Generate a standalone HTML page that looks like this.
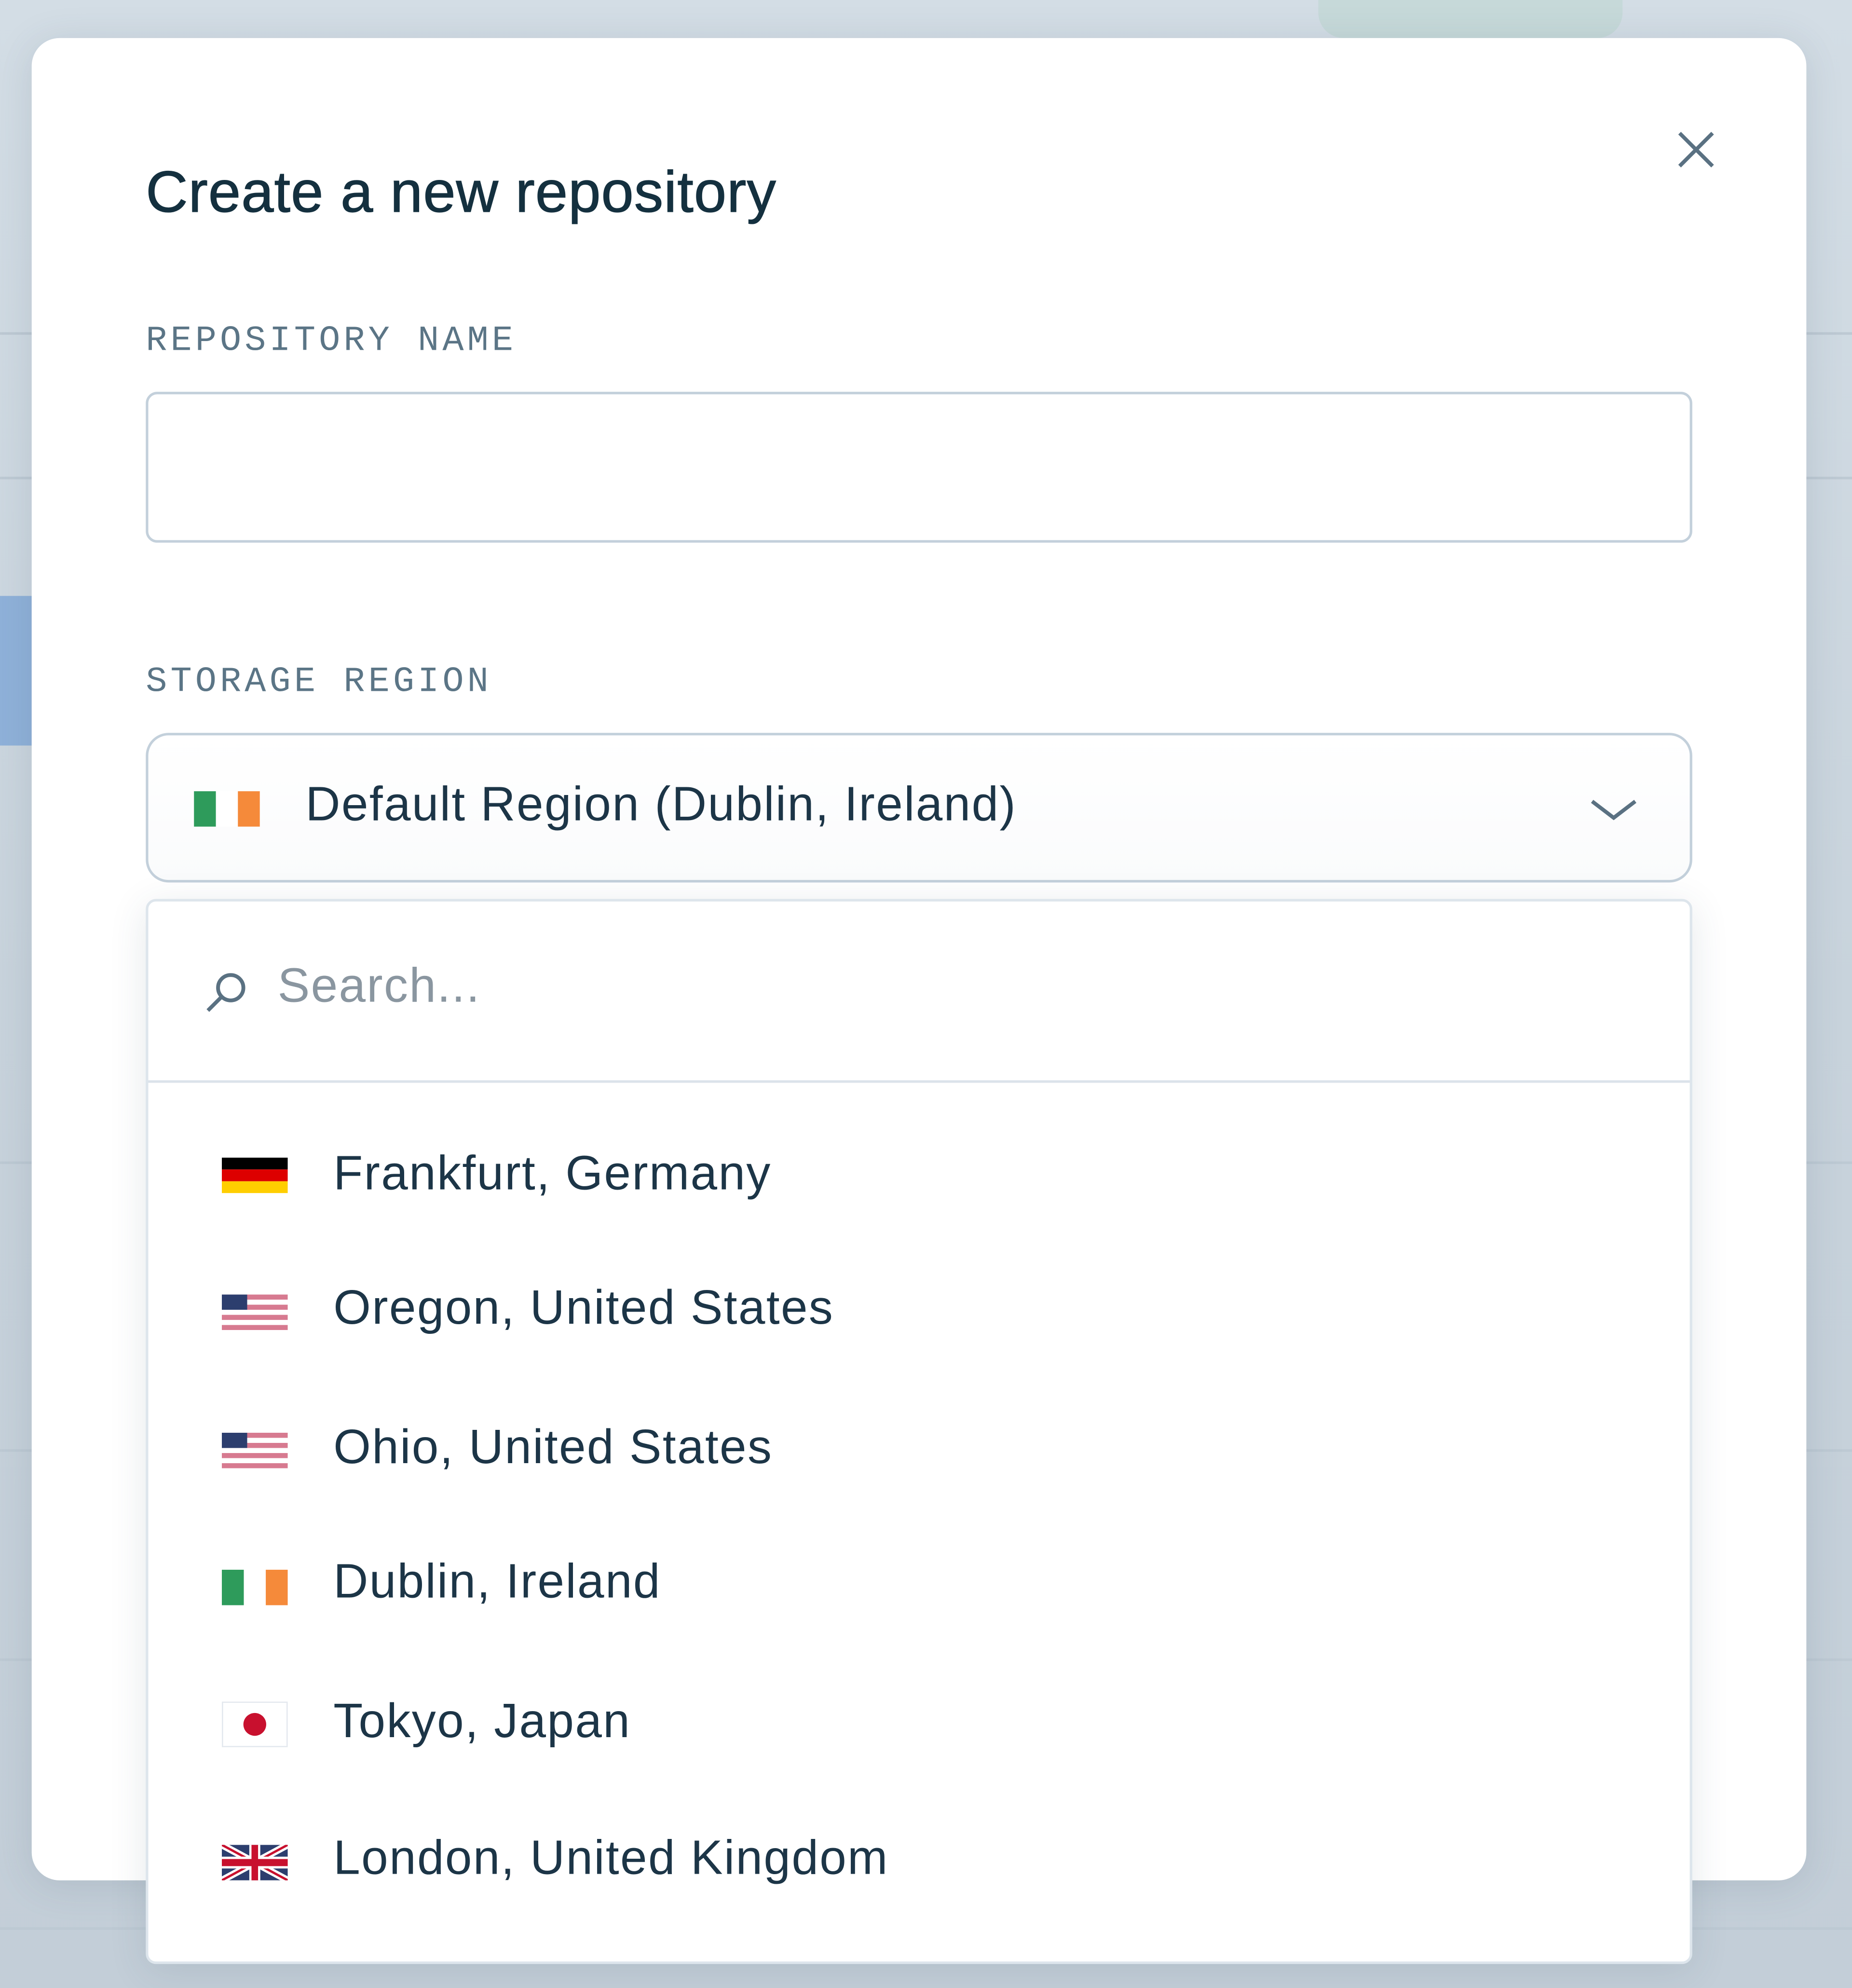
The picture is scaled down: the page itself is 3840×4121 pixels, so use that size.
<!DOCTYPE html>
<html><head><meta charset="utf-8"><style>
html,body{margin:0;padding:0;}
body{width:3840px;height:4120px;overflow:hidden;background:#cbd6df;}
#s{position:absolute;left:0;top:0;width:1461px;height:1568px;transform:scale(2.62834);transform-origin:0 0;background:linear-gradient(180deg,#d3dde5 0%,#c8d3dc 50%,#c3ced8 100%);font-family:"Liberation Sans",sans-serif;}
.bgl{position:absolute;height:2px;background:#bdc9d3;}
.modal{position:absolute;left:25px;top:30px;width:1400px;height:1453px;background:#fff;border-radius:22px;box-shadow:0 4px 30px rgba(60,80,100,.15);}
.a{position:absolute;}
.title{left:115px;top:124px;font-size:46px;color:#14303f;letter-spacing:0.4px;white-space:nowrap;-webkit-text-stroke:0.5px #14303f;}
.lbl{font-family:"Liberation Mono",monospace;font-size:28px;letter-spacing:2.7px;color:#5b7586;white-space:nowrap;}
.box{border:2px solid #c3d0db;box-sizing:border-box;background:#fff;}
.txt{font-size:38px;color:#1c3547;white-space:nowrap;letter-spacing:0.9px;}
.flag{position:absolute;width:52px;height:28px;}
</style></head><body><div id="s">
<div class="bgl" style="left:0;top:262px;width:1461px"></div>
<div class="bgl" style="left:0;top:376px;width:1461px"></div>
<div class="bgl" style="left:0;top:916px;width:1461px"></div>
<div class="bgl" style="left:0;top:1143px;width:1461px"></div>
<div class="bgl" style="left:0;top:1308px;width:1461px"></div>
<div class="bgl" style="left:0;top:1520px;width:1461px"></div>
<div class="a" style="left:0;top:470px;width:25px;height:118px;background:#8fb1d9"></div>
<div class="a" style="left:1040px;top:0;width:240px;height:30px;background:#c6d9d9;border-radius:0 0 20px 20px"></div>
<div class="modal"></div>
<svg class="a" style="left:1322px;top:102px" width="32" height="32" viewBox="0 0 32 32"><path d="M3 3L29 29M29 3L3 29" stroke="#5a7182" stroke-width="3" fill="none"/></svg>
<div class="a title">Create a new repository</div>
<div class="a lbl" style="left:115px;top:254px">REPOSITORY NAME</div>
<div class="a box" style="left:115px;top:309px;width:1220px;height:119px;border-radius:9px"></div>
<div class="a lbl" style="left:115px;top:523px">STORAGE REGION</div>
<div class="a box" style="left:115px;top:578px;width:1220px;height:118px;border-radius:18px;background:linear-gradient(#fff,#fafbfc)"></div>
<svg class="flag" style="left:153px;top:624px" viewBox="0 0 3 2" preserveAspectRatio="none"><rect width="1" height="2" fill="#2e9b5b"/><rect x="1" width="1" height="2" fill="#fff"/><rect x="2" width="1" height="2" fill="#f58a3a"/></svg>
<div class="a txt" style="left:241px;top:614px">Default Region (Dublin, Ireland)</div>
<svg class="a" style="left:1254px;top:628px" width="38" height="22" viewBox="0 0 38 22"><path d="M2 4L19 17L36 4" stroke="#5a7182" stroke-width="3" fill="none"/></svg>
<div class="a box" style="left:115px;top:709px;width:1220px;height:840px;border-radius:8px;border-color:#dde5ec;box-shadow:0 6px 30px rgba(50,70,90,.12)"></div>
<div class="a" style="left:117px;top:852px;width:1216px;height:2px;background:#dbe3ea"></div>
<svg class="a" style="left:160px;top:764px" width="38" height="38" viewBox="0 0 38 38"><circle cx="22" cy="15" r="10" stroke="#5a7182" stroke-width="3" fill="none"/><path d="M15 22L4 33" stroke="#5a7182" stroke-width="3"/></svg>
<div class="a txt" style="left:219px;top:757px;color:#8a96a0">Search...</div>

<svg class="flag" style="left:175px;top:913px" viewBox="0 0 5 3" preserveAspectRatio="none"><rect width="5" height="1" fill="#000"/><rect y="1" width="5" height="1" fill="#dd0000"/><rect y="2" width="5" height="1" fill="#ffce00"/></svg>
<div class="a txt" style="left:263px;top:905px">Frankfurt, Germany</div>

<svg class="flag" style="left:175px;top:1021px" viewBox="0 0 13 7" preserveAspectRatio="none"><rect width="13" height="7" fill="#fff"/><g fill="#d77a90"><rect y="0" width="13" height="1"/><rect y="2" width="13" height="1"/><rect y="4" width="13" height="1"/><rect y="6" width="13" height="1"/></g><rect width="5" height="3" fill="#2c3e6e"/></svg>
<div class="a txt" style="left:263px;top:1011px">Oregon, United States</div>

<svg class="flag" style="left:175px;top:1130px" viewBox="0 0 13 7" preserveAspectRatio="none"><rect width="13" height="7" fill="#fff"/><g fill="#d77a90"><rect y="0" width="13" height="1"/><rect y="2" width="13" height="1"/><rect y="4" width="13" height="1"/><rect y="6" width="13" height="1"/></g><rect width="5" height="3" fill="#2c3e6e"/></svg>
<div class="a txt" style="left:263px;top:1121px">Ohio, United States</div>

<svg class="flag" style="left:175px;top:1238px" viewBox="0 0 3 2" preserveAspectRatio="none"><rect width="1" height="2" fill="#2e9b5b"/><rect x="1" width="1" height="2" fill="#fff"/><rect x="2" width="1" height="2" fill="#f58a3a"/></svg>
<div class="a txt" style="left:263px;top:1227px">Dublin, Ireland</div>

<svg class="flag" style="left:175px;top:1342px;height:36px" viewBox="0 0 52 36"><rect x="0.5" y="0.5" width="51" height="35" fill="#fff" stroke="#e3e8ee"/><circle cx="26" cy="18" r="9" fill="#c8102e"/></svg>
<div class="a txt" style="left:263px;top:1337px">Tokyo, Japan</div>

<svg class="flag" style="left:175px;top:1455px" viewBox="0 0 60 30" preserveAspectRatio="none"><rect width="60" height="30" fill="#2c3e6e"/><path d="M0 0L60 30M60 0L0 30" stroke="#fff" stroke-width="6"/><path d="M0 0L60 30M60 0L0 30" stroke="#c8102e" stroke-width="2"/><path d="M30 0V30M0 15H60" stroke="#fff" stroke-width="10"/><path d="M30 0V30M0 15H60" stroke="#c8102e" stroke-width="6"/></svg>
<div class="a txt" style="left:263px;top:1445px">London, United Kingdom</div>
</div></body></html>
